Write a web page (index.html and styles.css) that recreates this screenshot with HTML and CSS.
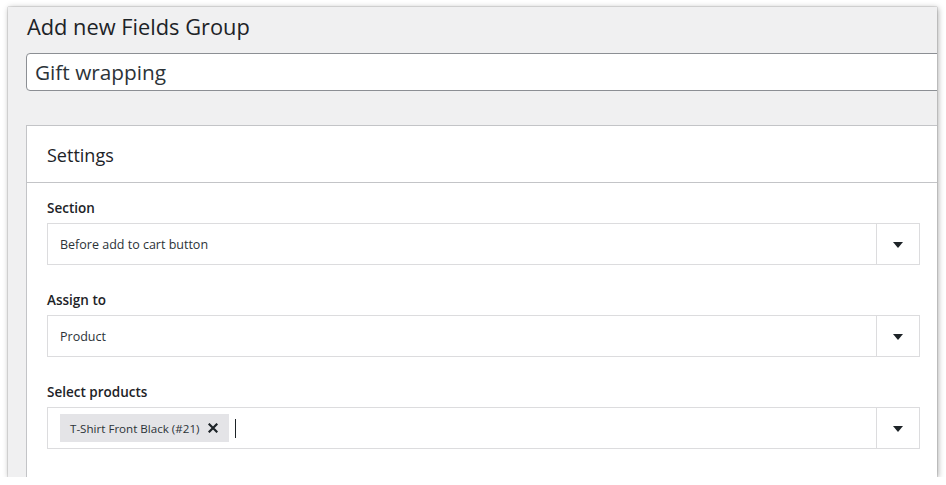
FILE: index.html
```html
<!DOCTYPE html>
<html>
<head>
<meta charset="utf-8">
<link rel="stylesheet" href="styles.css">
</head>
<body>
<div class="window">
  <div class="wrap">
    <h1 class="title">Add new Fields Group</h1>
    <div class="name-input">Gift wrapping</div>
    <div class="card">
      <div class="card-head">Settings</div>
      <div class="card-body">
        <div class="field">
          <div class="label">Section</div>
          <div class="select">
            <div class="select-value">Before add to cart button</div>
            <div class="select-arrow"><span class="tri"></span></div>
          </div>
        </div>
        <div class="field">
          <div class="label">Assign to</div>
          <div class="select">
            <div class="select-value">Product</div>
            <div class="select-arrow"><span class="tri"></span></div>
          </div>
        </div>
        <div class="field">
          <div class="label">Select products</div>
          <div class="select">
            <div class="select-value multi">
              <span class="chip">T-Shirt Front Black (#21)
                <svg class="chip-x" width="10" height="10" viewBox="0 0 10 10"><path d="M1.5 1.5 L8.5 8.5 M8.5 1.5 L1.5 8.5" stroke="#1d2327" stroke-width="2.2" stroke-linecap="square"/></svg>
              </span>
              <span class="caret"></span>
            </div>
            <div class="select-arrow"><span class="tri"></span></div>
          </div>
        </div>
      </div>
    </div>
  </div>
</div>
</body>
</html>
```
FILE: styles.css
```css
html, body {
  margin: 0;
  padding: 0;
  background: #ffffff;
}
body {
  font-family: "Open Sans", "Noto Sans", sans-serif;
  color: #1d2327;
}
.window {
  margin: 7px 0 0 8px;
  width: 929px;
  height: 470px;
  background: #f0f0f1;
  overflow: hidden;
  box-shadow: 0 0 1px rgba(0,0,0,0.5), 1px 1px 6px rgba(0,0,0,0.35);
}
.wrap {
  width: 1000px;
  padding: 0 0 0 18px;
}
.title {
  margin: 0;
  padding: 6px 0 0 1px;
  height: 40px;
  box-sizing: border-box;
  font-size: 21.8px;
  font-weight: 400;
  line-height: 28px;
  color: #1d2327;
}
.name-input {
  height: 38px;
  box-sizing: border-box;
  border: 1px solid #8c8f94;
  border-radius: 4px;
  background: #fff;
  padding: 0 8px;
  font-size: 20.8px;
  line-height: 37px;
  color: #2c3338;
  margin-top: 6px;
}
.card {
  margin-top: 34px;
  background: #fff;
  border: 1px solid #c3c4c7;
  height: 400px;
}
.card-head {
  height: 57px;
  box-sizing: border-box;
  border-bottom: 1px solid #c3c4c7;
  padding: 0 0 0 20px;
  font-size: 18px;
  line-height: 59px;
  color: #1d2327;
}
.card-body {
  padding: 15px 0 0 20px;
  width: 873px;
  display: flex;
  flex-direction: column;
  gap: 25px;
}
.field {
  height: 67px;
  display: flex;
  flex-direction: column;
  gap: 5px;
}
.label {
  height: 20px;
  font-size: 13.5px;
  font-weight: 600;
  line-height: 20px;
  color: #1d2327;
}
.select {
  display: flex;
  height: 42px;
  flex: none;
  box-sizing: border-box;
  border: 1px solid #dcdcde;
  background: #fff;
}
.select-value {
  flex: 1;
  display: flex;
  align-items: center;
  padding-left: 12px;
  font-size: 12.5px;
  color: #2c3338;
}
.select-value.multi {
  padding-left: 12px;
  gap: 6px;
}
.select-arrow {
  width: 42px;
  border-left: 1px solid #dcdcde;
  display: flex;
  align-items: center;
  justify-content: center;
}
.tri {
  width: 0;
  height: 0;
  border-left: 5px solid transparent;
  border-right: 5px solid transparent;
  border-top: 6px solid #1d2327;
  margin-top: 1px;
}
.chip {
  display: inline-flex;
  align-items: center;
  height: 28px;
  padding: 0 11px 0 10px;
  background: #e4e4e7;
  font-size: 11.6px;
  color: #2c3338;
  gap: 9px;
}
.chip-x {
  display: block;
}
.caret {
  width: 1px;
  height: 19px;
  background: #1d2327;
}
```
